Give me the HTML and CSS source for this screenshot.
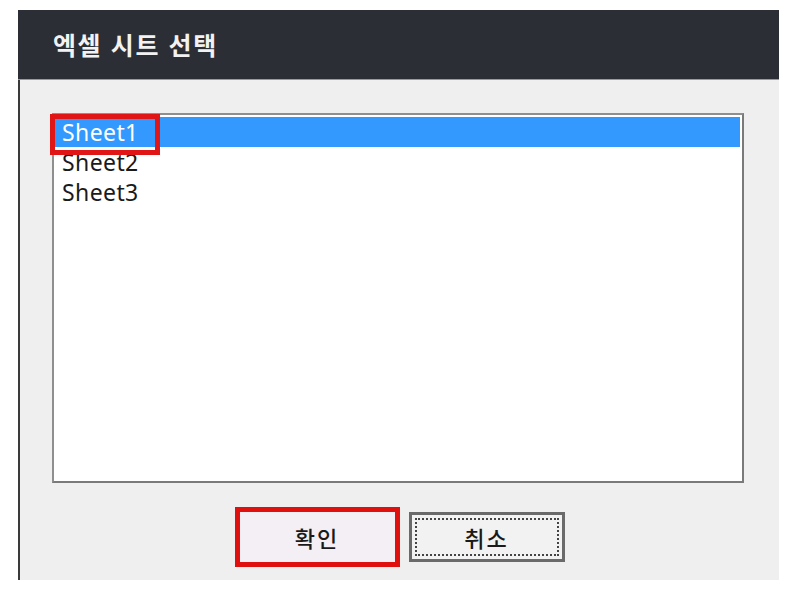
FILE: index.html
```html
<!DOCTYPE html>
<html lang="ko">
<head>
<meta charset="utf-8">
<title>엑셀 시트 선택</title>
<link rel="stylesheet" href="styles.css">
</head>
<body>
<div class="dialog">
  <div class="titlebar">엑셀 시트 선택</div>
  <div class="content">
    <div class="listbox">
      <div class="item selected">Sheet1</div>
      <div class="item">Sheet2</div>
      <div class="item">Sheet3</div>
      <div class="highlight"></div>
    </div>
    <div class="buttons">
      <button class="btn btn-ok">확인</button>
      <button class="btn btn-cancel"><span class="focus">취소</span></button>
    </div>
  </div>
</div>
</body>
</html>
```
FILE: styles.css
```css
html, body {
  margin: 0;
  padding: 0;
  background: #ffffff;
}
body {
  padding-top: 10px;
  padding-left: 18px;
  font-family: "Noto Sans", "Noto Sans CJK KR", sans-serif;
}
.dialog {
  width: 761px;
  height: 570px;
  display: flex;
  flex-direction: column;
  background: #efefef;
}
.titlebar {
  height: 70px;
  box-sizing: border-box;
  background: #2b2e34;
  color: #f2f2f2;
  font-family: "Noto Sans CJK KR", sans-serif;
  font-size: 25px;
  font-weight: 700;
  letter-spacing: 1.6px;
  padding-left: 35px;
  line-height: 68px;
  border-bottom: 1px solid #9a9a9a;
}
.content {
  flex: 1;
  border-left: 2px solid #3a3a3a;
  padding: 33px 0 0 32px;
  display: flex;
  flex-direction: column;
}
.listbox {
  position: relative;
  width: 692px;
  height: 370px;
  box-sizing: border-box;
  background: #ffffff;
  border: 2px solid #8f8f8f;
  border-right-color: #7a7a7a;
  border-bottom-color: #7a7a7a;
  padding: 2px 2px 0 0;
}
.item {
  height: 30px;
  line-height: 30px;
  padding-left: 8px;
  font-size: 23px;
  color: #1a1a1a;
  letter-spacing: 0.4px;
}
.item.selected {
  background: #3399ff;
  color: #ffffff;
}
.highlight {
  position: absolute;
  left: -4px;
  top: -1px;
  width: 110px;
  height: 41px;
  box-sizing: border-box;
  border: 5px solid #e01515;
}
.buttons {
  display: flex;
  justify-content: center;
  align-items: center;
  gap: 9px;
  margin-top: 24px;
  margin-left: -32px;
}
.btn {
  font-family: "Noto Sans CJK KR", sans-serif;
  font-size: 22px;
  font-weight: 500;
  letter-spacing: 2px;
  color: #1a1a1a;
  box-sizing: border-box;
  padding: 0;
  margin: 0;
}
.btn-ok {
  width: 165px;
  height: 60px;
  background: #f3eff4;
  border: 5px solid #e0100f;
}
.btn-cancel {
  width: 156px;
  height: 50px;
  background: #f2f2f2;
  border: 3px solid #6a6a6a;
  padding: 3px;
}
.focus {
  display: flex;
  align-items: center;
  justify-content: center;
  height: 100%;
  box-sizing: border-box;
  border: 2px dotted #444444;
}
```
